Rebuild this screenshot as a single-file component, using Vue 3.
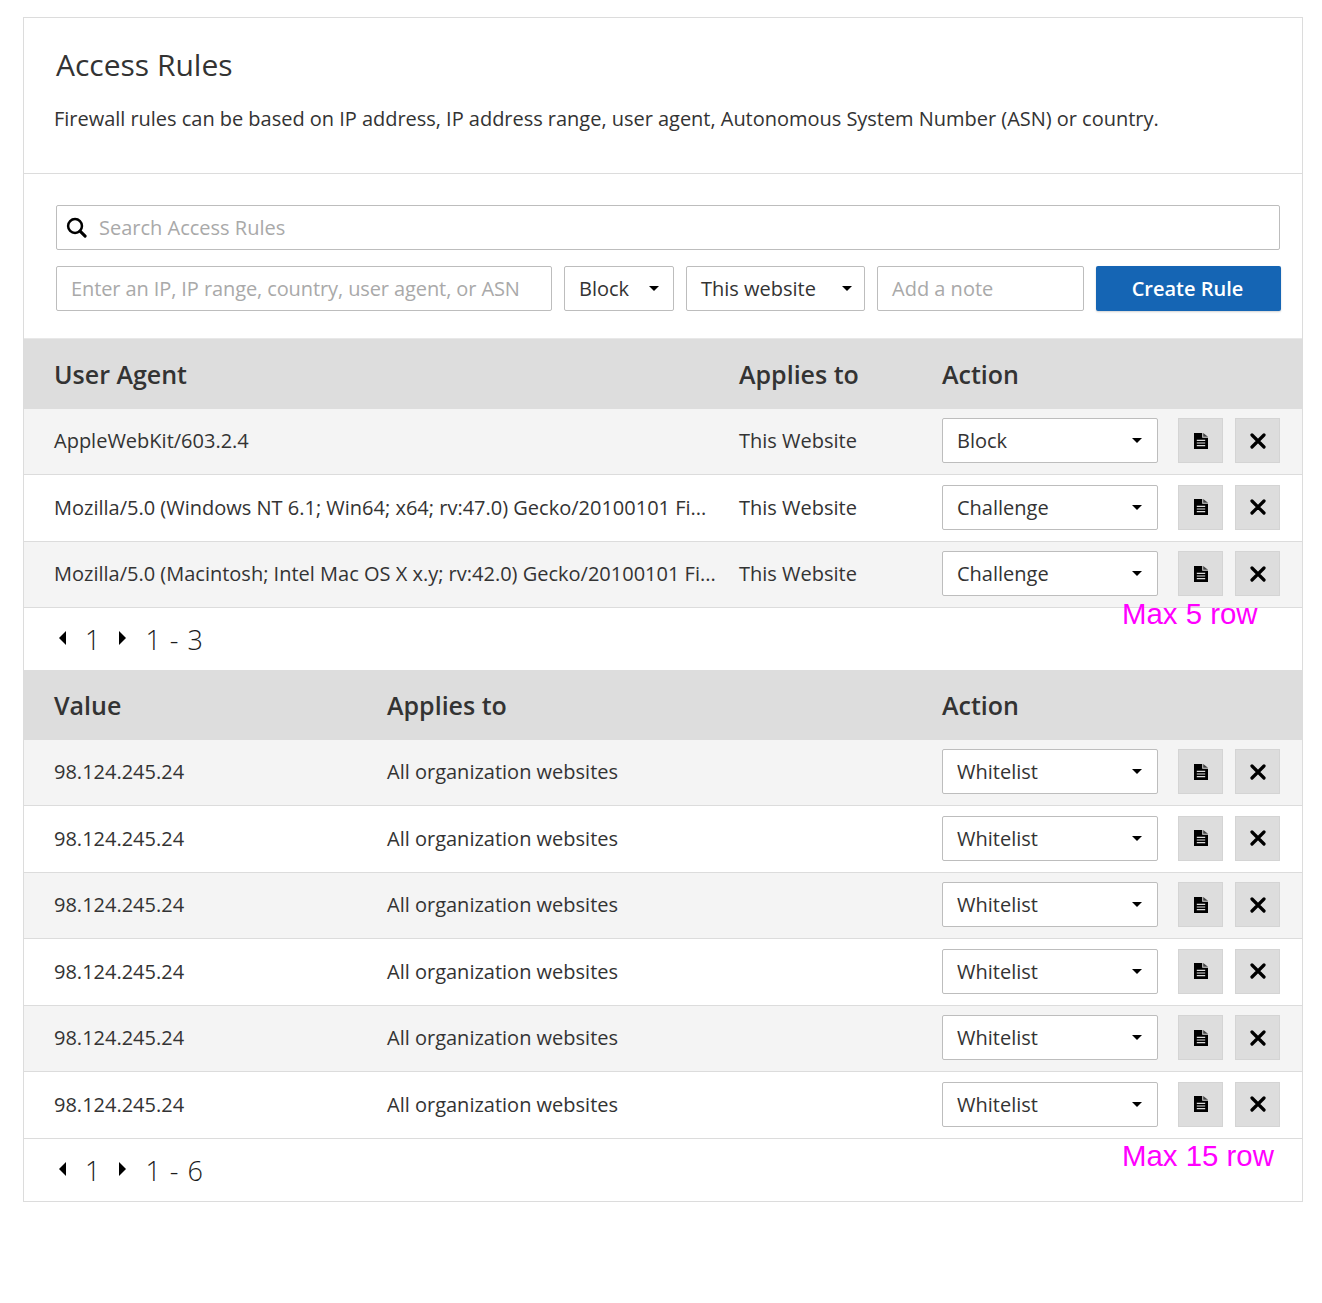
<script setup>
const agentRows = [
  { value: 'AppleWebKit/603.2.4', scope: 'This Website', action: 'Block' },
  { value: 'Mozilla/5.0 (Windows NT 6.1; Win64; x64; rv:47.0) Gecko/20100101 Fi...', scope: 'This Website', action: 'Challenge' },
  { value: 'Mozilla/5.0 (Macintosh; Intel Mac OS X x.y; rv:42.0) Gecko/20100101 Fi...', scope: 'This Website', action: 'Challenge' },
]
const valueRows = Array.from({ length: 6 }, () => ({
  value: '98.124.245.24',
  scope: 'All organization websites',
  action: 'Whitelist',
}))
const tables = [
  { cls: 'agents', first: 'User Agent', rows: agentRows, range: '1 - 3', note: 'Max 5 row', noteCls: 'note-five' },
  { cls: 'values', first: 'Value', rows: valueRows, range: '1 - 6', note: 'Max 15 row', noteCls: 'note-fifteen' },
]
</script>

<template>
  <div class="page">
    <section class="card">
      <header class="intro">
        <h1>Access Rules</h1>
        <p>Firewall rules can be based on IP address, IP address range, user agent, Autonomous System Number (ASN) or country.</p>
      </header>

      <div class="controls">
        <div class="field search">
          <svg class="search-icon" viewBox="0 0 20 20" width="21" height="21" aria-hidden="true">
            <circle cx="8.6" cy="8.6" r="6.6" fill="none" stroke="#000" stroke-width="2.4" />
            <path d="M13.4 13.4 18.2 18.2" stroke="#000" stroke-width="2.9" stroke-linecap="round" />
          </svg>
          <span class="placeholder">Search Access Rules</span>
        </div>
        <div class="add-row">
          <div class="field target"><span class="placeholder tight">Enter an IP, IP range, country, user agent, or ASN</span></div>
          <div class="field pick pick-mode"><span>Block</span><i class="caret"></i></div>
          <div class="field pick pick-scope"><span>This website</span><i class="caret"></i></div>
          <div class="field note-input"><span class="placeholder">Add a note</span></div>
          <button class="create" type="button">Create Rule</button>
        </div>
      </div>

      <div v-for="t in tables" :key="t.cls" class="table" :class="t.cls">
        <div class="row head">
          <div>{{ t.first }}</div>
          <div>Applies to</div>
          <div>Action</div>
        </div>
        <div v-for="(r, i) in t.rows" :key="i" class="row body" :class="{ odd: i % 2 === 0 }">
          <div class="value">{{ r.value }}</div>
          <div>{{ r.scope }}</div>
          <div class="actions">
            <div class="field pick row-pick"><span>{{ r.action }}</span><i class="caret"></i></div>
            <button class="icon-btn" type="button" aria-label="Note">
              <svg viewBox="0 0 14 16" width="14" height="16" aria-hidden="true">
                <path d="M0 0h8.2v4.8H14V16H0z" fill="#000" />
                <path d="M9.2 0 14 3.8H9.2z" fill="#444" />
                <path d="M2.8 7.4h8.4M2.8 10h8.4M2.8 12.6h8.4" stroke="#ddd" stroke-width="1.2" />
              </svg>
            </button>
            <button class="icon-btn" type="button" aria-label="Delete">
              <svg viewBox="0 0 16 16" width="16" height="16" aria-hidden="true">
                <path d="M2 2 14 14M14 2 2 14" stroke="#000" stroke-width="3.2" stroke-linecap="round" />
              </svg>
            </button>
          </div>
        </div>
        <footer class="pager">
          <i class="arrow left"></i>
          <span class="num">1</span>
          <i class="arrow right"></i>
          <span class="num range">{{ t.range }}</span>
          <span class="annotation" :class="t.noteCls">{{ t.note }}</span>
        </footer>
      </div>
    </section>
  </div>
</template>

<style>
html, body { margin: 0; background: #fff; }
</style>

<style scoped>
.page {
  padding: 17px 19px 100px 23px;
  font-family: "Open Sans", "Noto Sans", sans-serif;
  color: #333;
}
.card {
  border: 1px solid #dcdcdc;
  background: #fff;
}
.intro {
  height: 156px;
  box-sizing: border-box;
  padding: 26px 30px 0;
  border-bottom: 1px solid #dcdcdc;
}
h1 {
  margin: 0 0 0 2px;
  font-size: 30px;
  line-height: 42px;
  font-weight: 400;
}
p {
  margin: 19px 0 0;
  font-size: 20px;
  line-height: 28px;
  letter-spacing: -0.026px;
}
.controls {
  padding: 31px 22px 27px 32px;
  display: flex;
  flex-direction: column;
  gap: 16px;
}
.field {
  height: 45px;
  box-sizing: border-box;
  border: 1px solid #bdbdbd;
  border-radius: 2px;
  background: #fff;
  display: flex;
  align-items: center;
  font-size: 20px;
  color: #333;
}
.placeholder { color: #a9a9a9; }
.tight { letter-spacing: -0.1px; }
.search { padding-left: 9px; gap: 12px; }
.search-icon { flex: none; }
.add-row { display: flex; gap: 12px; }
.add-row > * { flex: none; }
.target { width: 496px; padding-left: 14px; }
.pick { justify-content: space-between; padding: 0 15px 0 14px; }
.pick-mode { width: 110px; padding-right: 14px; }
.pick-scope { width: 179px; padding-right: 12px; }
.note-input { width: 207px; padding-left: 14px; }
.caret {
  width: 0;
  height: 0;
  border-left: 5.5px solid transparent;
  border-right: 5.5px solid transparent;
  border-top: 5.5px solid #000;
}
.create {
  width: 185px;
  height: 45px;
  border: 0;
  border-radius: 2px;
  background: #1565b4;
  color: #fff;
  font: 600 20px "Open Sans", sans-serif;
  box-shadow: 0 1px 2px rgba(0, 0, 0, 0.18);
  padding: 0 2px 0 0;
}
.row {
  display: grid;
  align-items: center;
  padding-left: 30px;
}
.agents .row { grid-template-columns: 685px 203px 1fr; }
.values .row { grid-template-columns: 333px 555px 1fr; }
.head {
  box-sizing: border-box;
  background: #dddddd;
  font-size: 25px;
  font-weight: 600;
}
.agents .head { height: 70.5px; border-top: 1px solid #e8e8e8; }
.values .head { height: 69.5px; padding-top: 1px; }
.body {
  height: 66.5px;
  box-sizing: border-box;
  padding-bottom: 1px;
  border-bottom: 1px solid #dcdcdc;
  font-size: 20px;
  background: #fff;
}
.body.odd { background: #f4f4f4; }
.value { white-space: nowrap; }
.actions { display: flex; align-items: center; }
.row-pick { width: 216px; margin-right: 20px; }
.icon-btn {
  width: 45px;
  height: 45px;
  padding: 0;
  margin-right: 12px;
  border: 1px solid #d4d4d4;
  background: #dddddd;
  display: flex;
  align-items: center;
  justify-content: center;
}
.icon-btn:last-child { margin-right: 0; }
.pager {
  position: relative;
  height: 62px;
  box-sizing: border-box;
  display: flex;
  align-items: center;
  padding-left: 35px;
  font-size: 27px;
  font-weight: 300;
  color: #1c1c1c;
}
.values .pager { height: 62.5px; padding-top: 1px; }
.arrow {
  width: 0;
  height: 0;
  margin-top: -2px;
  border-top: 7px solid transparent;
  border-bottom: 7px solid transparent;
}
.arrow.left { border-right: 7px solid #000; }
.arrow.right { border-left: 7px solid #000; }
.num { margin: 0 19px 0 19px; }
.range { margin: 0 0 0 19px; word-spacing: 2px; }
.annotation {
  position: absolute;
  font: 400 29.4px "Liberation Sans", Arial, sans-serif;
  color: #ff00ff;
  white-space: nowrap;
}
.note-five { left: 1098px; top: -11px; }
.note-fifteen { left: 1098px; top: 0; }
</style>
